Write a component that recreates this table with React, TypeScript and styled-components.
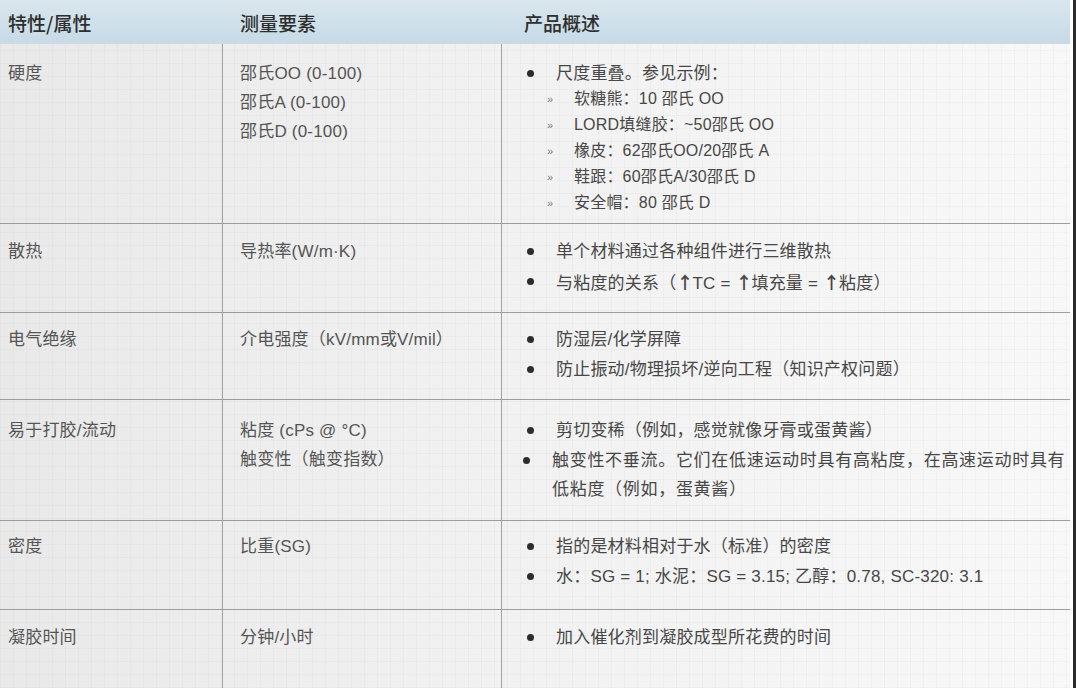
import React from "react";
import styled, { createGlobalStyle } from "styled-components";

const GlobalStyle = createGlobalStyle`
  html, body {
    margin: 0;
    padding: 0;
    background: #ffffff;
  }
  body {
    font-family: "Liberation Sans", "Noto Sans CJK SC", sans-serif;
  }
`;

const Page = styled.div`
  width: 1076px;
  height: 688px;
  box-sizing: border-box;
  display: flex;
  overflow: hidden;
  background: #ffffff;
  border-right: 3px solid #2b2b2b;
`;

const Table = styled.div`
  width: 1070px;
  flex: none;
  height: 688px;
  display: flex;
  flex-direction: column;
  overflow: hidden;
  background-color: #f0f0f0;
  background-image:
    repeating-linear-gradient(90deg, rgba(0, 0, 0, 0.025) 0 1px, transparent 1px 13px),
    repeating-linear-gradient(0deg, rgba(0, 0, 0, 0.025) 0 1px, transparent 1px 13px),
    linear-gradient(90deg, #e9e9e9 0%, #f1f1f1 45%, #f8f8f8 100%);
`;

const Row = styled.div<{ $h?: number }>`
  display: grid;
  grid-template-columns: 223px 279px 568px;
  box-sizing: border-box;
  height: ${(p) => (p.$h ? `${p.$h}px` : "auto")};
  flex: ${(p) => (p.$h ? "none" : "1")};
  border-bottom: ${(p) => (p.$h ? "1px solid #9c9c9c" : "none")};
`;

const HeadRow = styled(Row)`
  border-bottom: none;
  background: linear-gradient(180deg, #d9e6ee 0%, #cddfe9 60%, #c7dae5 100%);
`;

const HeadCell = styled.div<{ $indent: number }>`
  display: flex;
  align-items: center;
  padding-left: ${(p) => p.$indent}px;
  font-family: "Noto Sans CJK SC", "Liberation Sans", sans-serif;
  font-size: 19px;
  font-weight: 500;
  color: #2e2e2e;
`;

const Cell = styled.div<{ $indent: number; $pad: number; $line?: boolean }>`
  box-sizing: border-box;
  min-width: 0;
  padding: ${(p) => p.$pad}px 0 0 ${(p) => p.$indent}px;
  border-right: ${(p) => (p.$line ? "1px solid #a2a2a2" : "none")};
  font-size: 17px;
  line-height: 29px;
  color: #555555;
  overflow: hidden;
`;

const Line = styled.div`
  white-space: nowrap;
  letter-spacing: 0.2px;
`;

const Bullets = styled.ul`
  list-style: none;
  margin: 0;
  padding: 0;
  color: #474747;
`;

const Item = styled.li<{ $shift?: number; $spread?: number }>`
  display: flex;
  white-space: nowrap;
  margin: 0 0 1px ${(p) => -(p.$shift ?? 0)}px;
  letter-spacing: ${(p) => p.$spread ?? 0.2}px;
`;

const Dot = styled.span`
  flex: none;
  width: 31px;
  position: relative;
  &::before {
    content: "";
    position: absolute;
    left: 2px;
    top: 11px;
    width: 7px;
    height: 7px;
    border-radius: 50%;
    background: #2c2c2c;
  }
`;

const Arrow = styled.span`
  font-family: "Noto Sans CJK SC", sans-serif;
  font-weight: 700;
  letter-spacing: -1px;
`;

const SubList = styled.ul`
  list-style: none;
  margin: -3px 0 0 22px;
  padding: 0;
`;

const SubItem = styled.li`
  display: flex;
  font-size: 16px;
  line-height: 26px;
  white-space: nowrap;
  letter-spacing: 0.2px;
  &::before {
    content: "»";
    width: 27px;
    flex: none;
    font-size: 11px;
    color: #777777;
  }
`;

type Point = { text: React.ReactNode; subs?: string[]; shift?: number; spread?: number };
type RowData = {
  h?: number;
  pad: number;
  name: string;
  measures: string[];
  points: Point[];
};

const rows: RowData[] = [
  {
    h: 180,
    pad: 15,
    name: "硬度",
    measures: ["邵氏OO (0-100)", "邵氏A (0-100)", "邵氏D (0-100)"],
    points: [
      {
        text: "尺度重叠。参见示例：",
        subs: [
          "软糖熊：10  邵氏  OO",
          "LORD填缝胶：~50邵氏  OO",
          "橡皮：62邵氏OO/20邵氏 A",
          "鞋跟：60邵氏A/30邵氏  D",
          "安全帽：80 邵氏  D",
        ],
      },
    ],
  },
  {
    h: 89,
    pad: 13,
    name: "散热",
    measures: ["导热率(W/m·K)"],
    points: [
      { text: "单个材料通过各种组件进行三维散热" },
      {
        text: (
          <>
            与粘度的关系（<Arrow>↑</Arrow>TC = <Arrow>↑</Arrow>填充量  = <Arrow>↑</Arrow>粘度）
          </>
        ),
      },
    ],
  },
  {
    h: 87,
    pad: 12,
    name: "电气绝缘",
    measures: ["介电强度（kV/mm或V/mil）"],
    points: [
      { text: "防湿层/化学屏障" },
      { text: "防止振动/物理损坏/逆向工程（知识产权问题）" },
    ],
  },
  {
    h: 121,
    pad: 16,
    name: "易于打胶/流动",
    measures: ["粘度  (cPs @ °C)", "触变性（触变指数）"],
    points: [
      { text: "剪切变稀（例如，感觉就像牙膏或蛋黄酱）" },
      {
        shift: 4,
        spread: 0.7,
        text: (
          <>
            触变性不垂流。它们在低速运动时具有高粘度，在高速运动时具有
            <br />
            低粘度（例如，蛋黄酱）
          </>
        ),
      },
    ],
  },
  {
    h: 89,
    pad: 11,
    name: "密度",
    measures: ["比重(SG)"],
    points: [
      { text: "指的是材料相对于水（标准）的密度" },
      { text: "水：SG = 1; 水泥：SG = 3.15; 乙醇：0.78, SC-320: 3.1" },
    ],
  },
  {
    pad: 13,
    name: "凝胶时间",
    measures: ["分钟/小时"],
    points: [{ text: "加入催化剂到凝胶成型所花费的时间" }],
  },
];

const App: React.FC = () => {
  return (
    <>
      <GlobalStyle />
      <Page>
        <Table>
          <HeadRow $h={44}>
            <HeadCell $indent={8}>特性/属性</HeadCell>
            <HeadCell $indent={17}>测量要素</HeadCell>
            <HeadCell $indent={22}>产品概述</HeadCell>
          </HeadRow>
          {rows.map((r) => (
            <Row key={r.name} $h={r.h}>
              <Cell $indent={8} $pad={r.pad} $line>
                <Line>{r.name}</Line>
              </Cell>
              <Cell $indent={17} $pad={r.pad} $line>
                {r.measures.map((m) => (
                  <Line key={m}>{m}</Line>
                ))}
              </Cell>
              <Cell $indent={23} $pad={r.pad}>
                <Bullets>
                  {r.points.map((p, i) => (
                    <React.Fragment key={i}>
                      <Item $shift={p.shift} $spread={p.spread}>
                        <Dot />
                        <span>{p.text}</span>
                      </Item>
                      {p.subs && (
                        <SubList>
                          {p.subs.map((s) => (
                            <SubItem key={s}>{s}</SubItem>
                          ))}
                        </SubList>
                      )}
                    </React.Fragment>
                  ))}
                </Bullets>
              </Cell>
            </Row>
          ))}
        </Table>
      </Page>
    </>
  );
};

export default App;
